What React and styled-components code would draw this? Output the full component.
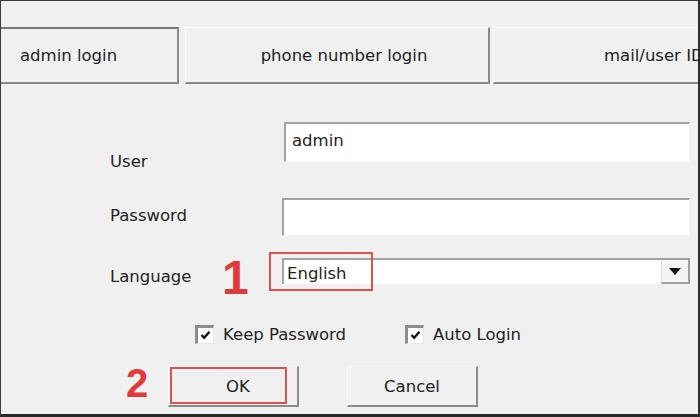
import React from 'react'
import styled, { createGlobalStyle } from 'styled-components'

const GlobalStyle = createGlobalStyle`
  html, body {
    margin: 0;
    padding: 0;
    background: #2b2b2b;
  }
  * { box-sizing: border-box; }
`

const Window = styled.div`
  width: 700px;
  height: 417px;
  overflow: hidden;
  background: #f0f0f0;
  border-top: 1px solid #3a3a3a;
  border-left: 1px solid #3a3a3a;
  border-right: 2px solid #2e2e2e;
  border-bottom: 3px solid #2a2a2a;
  font-family: "DejaVu Sans", "Liberation Sans", sans-serif;
  font-size: 16.5px;
  color: #222;
  display: flex;
  flex-direction: column;
`

const TabBar = styled.div`
  margin-top: 26px;
  height: 57px;
  display: flex;
  white-space: nowrap;
`

const Tab = styled.div`
  flex: none;
  width: ${p => p.width}px;
  margin-left: ${p => p.gap || 0}px;
  display: flex;
  align-items: center;
  justify-content: ${p => (p.align === 'left' ? 'flex-start' : 'center')};
  padding-left: ${p => p.pad || 0}px;
  border-bottom: 2px solid #8a8a8a;
  border-right: ${p => (p.noRight ? 'none' : '2px solid #8a8a8a')};
  border-top: 1px solid ${p => (p.active ? '#7a7a7a' : '#fafafa')};
  ${p => p.active && 'border-top-width: 2px;'}
  border-left: ${p => (p.active ? 'none' : '1px solid #fafafa')};
`

const Form = styled.div`
  display: flex;
  flex-direction: column;
  padding-left: 109px;
  padding-right: 8px;
`

const Row = styled.div`
  display: flex;
  align-items: flex-start;
  margin-top: ${p => p.top}px;
`

const Label = styled.div`
  flex: none;
  width: ${p => p.width}px;
  line-height: 20px;
  margin-top: ${p => p.offset}px;
`

const TextBox = styled.div`
  flex: 1;
  height: ${p => p.height}px;
  background: #fff;
  border-top: 2px solid #a3a3a3;
  border-left: 2px solid #a3a3a3;
  border-right: 1px solid #f4f4f4;
  border-bottom: 1px solid #f4f4f4;
  padding: 7px 0 0 6px;
  line-height: 20px;
`

const Step = styled.div`
  flex: none;
  font-family: "Liberation Sans", "DejaVu Sans", sans-serif;
  font-weight: bold;
  color: #e03a3a;
  font-size: ${p => p.size}px;
  line-height: 1;
  width: ${p => p.width}px;
  margin-top: ${p => p.offset}px;
`

const SelectWrap = styled.div`
  position: relative;
  flex: 1;
  margin-top: 6px;
  margin-left: ${p => p.left}px;
`

const Select = styled.div`
  height: 26px;
  display: flex;
  align-items: center;
  background: #fff;
  border-top: 2px solid #a3a3a3;
  border-left: 2px solid #a3a3a3;
  padding-left: 3px;
  line-height: 20px;
`

const SelectText = styled.div`
  flex: 1;
  padding-top: 4px;
`

const DropButton = styled.div`
  flex: none;
  width: 29px;
  height: 26px;
  margin-top: -2px;
  display: flex;
  align-items: center;
  justify-content: center;
  background: #f4f4f4;
  border: 2px solid #a0a0a0;
  border-left: 1px solid #dcdcdc;
`

const Callout = styled.div`
  position: absolute;
  left: -13px;
  top: -6px;
  width: 104px;
  height: 39px;
  border: 2px solid #e05050;
  pointer-events: none;
`

const Checks = styled.div`
  display: flex;
  align-items: center;
  margin-top: 22px;
  padding-left: 194px;
  height: 20px;
`

const CheckItem = styled.label`
  display: flex;
  align-items: center;
  gap: 9px;
  width: ${p => p.width}px;
  flex: none;
`

const Box = styled.span`
  width: 19px;
  height: 19px;
  display: inline-flex;
  align-items: center;
  justify-content: center;
  background: #fff;
  border-top: 3px solid #8c8c8c;
  border-left: 3px solid #8c8c8c;
  border-right: 1px solid #e6e6e6;
  border-bottom: 1px solid #e6e6e6;
`

const Buttons = styled.div`
  display: flex;
  align-items: flex-start;
  margin-top: 22px;
  padding-left: 125px;
`

const ButtonWrap = styled.div`
  position: relative;
  flex: none;
  margin-left: ${p => p.gap}px;
`

const Button = styled.div`
  width: 131px;
  height: 41px;
  display: flex;
  align-items: center;
  justify-content: center;
  background: #f0f0f0;
  border-top: 1px solid #f7f7f7;
  border-left: 1px solid #fbfbfb;
  border-right: 2px solid #8c8c8c;
  border-bottom: 2px solid #8c8c8c;
  padding-left: ${p => p.nudge || 0}px;
`

const ButtonCallout = styled.div`
  position: absolute;
  left: 2px;
  top: 1px;
  width: 117px;
  height: 37px;
  border: 2px solid #e05050;
`

function Check({ width, children }) {
  return (
    <CheckItem width={width}>
      <Box>
        <svg width="11" height="10" viewBox="0 0 11 10">
          <path d="M1.5 5 L4.2 7.8 L9.5 1.8" fill="none" stroke="#111" strokeWidth="2.4" />
        </svg>
      </Box>
      {children}
    </CheckItem>
  )
}

export default function App() {
  return (
    <>
      <GlobalStyle />
      <Window>
        <TabBar>
          <Tab active width={178} align="left" pad={19}>admin login</Tab>
          <Tab gap={6} width={305} pad={14}>phone number login</Tab>
          <Tab gap={3} width={320} align="left" pad={110} noRight>mail/user ID</Tab>
        </TabBar>

        <Form>
          <Row top={38}>
            <Label width={174} offset={30}>User</Label>
            <TextBox height={40}>admin</TextBox>
          </Row>
          <Row top={26}>
            <Label width={172} offset={8}>Password</Label>
            <TextBox height={38} />
          </Row>
          <Row top={16}>
            <Label width={112} offset={15}>Language</Label>
            <Step size={48} width={25} offset={2}>1</Step>
            <SelectWrap left={35}>
              <Select>
                <SelectText>English</SelectText>
                <DropButton>
                  <svg width="12" height="7" viewBox="0 0 12 7">
                    <path d="M0 0 H12 L6 7 Z" fill="#111" />
                  </svg>
                </DropButton>
              </Select>
              <Callout />
            </SelectWrap>
          </Row>
        </Form>

        <Checks>
          <Check width={210}>Keep Password</Check>
          <Check width={140}>Auto Login</Check>
        </Checks>

        <Buttons>
          <Step size={40} width={42} offset={-3}>2</Step>
          <ButtonWrap>
            <Button nudge={10}>OK</Button>
            <ButtonCallout />
          </ButtonWrap>
          <ButtonWrap gap={48}>
            <Button>Cancel</Button>
          </ButtonWrap>
        </Buttons>
      </Window>
    </>
  )
}
